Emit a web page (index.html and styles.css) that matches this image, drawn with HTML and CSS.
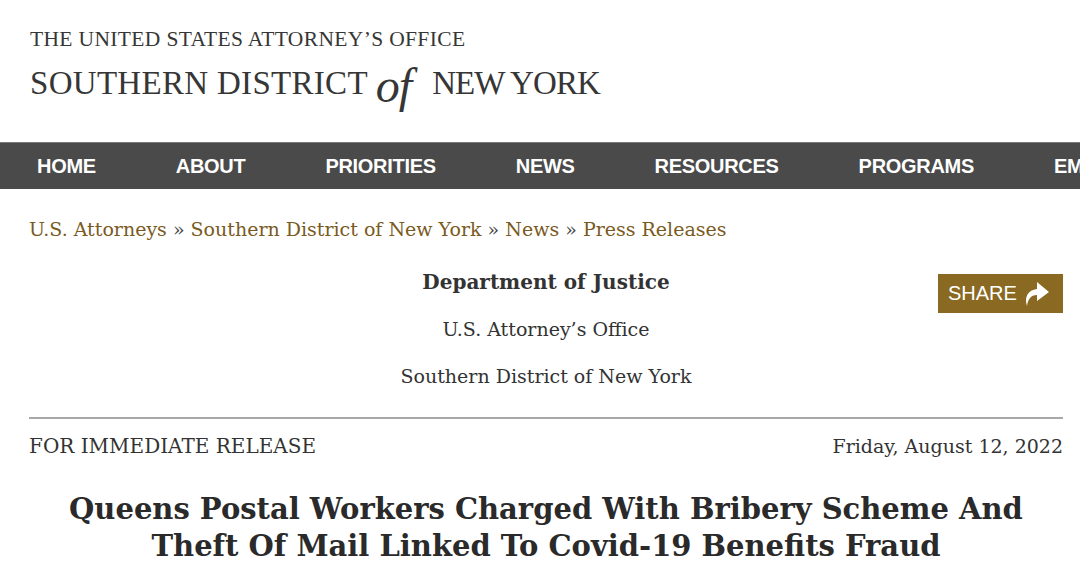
FILE: index.html
```html
<!DOCTYPE html>
<html>
<head>
<meta charset="utf-8">
<link rel="stylesheet" href="styles.css">
</head>
<body>
<header class="site-header">
  <div class="logo">
    <div class="logo-top">THE UNITED STATES ATTORNEY’S OFFICE</div>
    <div class="logo-main">SOUTHERN DISTRICT <span class="logo-of">of</span><span class="logo-ny">NEW YORK</span></div>
  </div>
</header>
<nav class="main-nav">
  <ul class="nav-list">
    <li>HOME</li>
    <li>ABOUT</li>
    <li>PRIORITIES</li>
    <li>NEWS</li>
    <li>RESOURCES</li>
    <li>PROGRAMS</li>
    <li>EMPLOYMENT</li>
  </ul>
</nav>
<main class="content">
  <div class="breadcrumb">
    <a>U.S. Attorneys</a> <span class="sep">»</span> <a>Southern District of New York</a> <span class="sep">»</span> <a>News</a> <span class="sep">»</span> <a>Press Releases</a>
  </div>
  <div class="agency-row">
    <div class="agency">
      <div class="agency-dept">Department of Justice</div>
      <div class="agency-line">U.S. Attorney’s Office</div>
      <div class="agency-line">Southern District of New York</div>
    </div>
    <div class="share">
      <span class="share-label">SHARE</span>
      <svg class="share-icon" width="28" height="28" viewBox="0 0 28 28">
        <path d="M5 27 C2 18 6 11 15 10 L15 3 L27 13 L15 22 L15 16 C10 16 6 19 5 27 Z" fill="#fff"/>
      </svg>
    </div>
  </div>
  <div class="release-row">
    <span class="release-label">FOR IMMEDIATE RELEASE</span>
    <span class="release-date">Friday, August 12, 2022</span>
  </div>
  <h1 class="title">Queens Postal Workers Charged With Bribery Scheme And Theft Of Mail Linked To Covid-19 Benefits Fraud</h1>
</main>
</body>
</html>
```
FILE: styles.css
```css
html, body {
  margin: 0;
  padding: 0;
  background: #fff;
}
body {
  font-family: "DejaVu Serif", "Liberation Serif", serif;
  color: #333;
  overflow: hidden;
  width: 1080px;
}
.site-header {
  height: 142px;
  padding: 27px 0 0 30px;
  box-sizing: border-box;
}
.logo {
  color: #363636;
  font-family: "Liberation Serif", serif;
}
.logo-top {
  font-size: 21.5px;
  line-height: 24px;
  letter-spacing: 0.35px;
}
.logo-main {
  font-size: 33px;
  line-height: 36px;
  margin-top: 9px;
  white-space: nowrap;
  letter-spacing: 0.3px;
}
.logo-of {
  font-style: italic;
  font-size: 48px;
  display: inline-block;
  transform: translateY(8px);
  margin: 0 21px 0 0;
  letter-spacing: -1px;
}
.logo-ny {
  letter-spacing: -0.9px;
}
.main-nav {
  background: #4a4a4a;
  height: 47px;
  overflow: hidden;
  border-top: 1px solid #777;
  box-sizing: border-box;
}
.nav-list {
  list-style: none;
  margin: 0;
  padding: 0 0 0 37px;
  display: flex;
  gap: 80px;
  white-space: nowrap;
  height: 100%;
  align-items: center;
}
.nav-list li {
  font-family: "Liberation Sans", Arial, sans-serif;
  font-weight: bold;
  font-size: 20px;
  color: #fff;
  letter-spacing: -0.3px;
}
.content {
  padding: 0 17px 0 29px;
}
.breadcrumb {
  margin-top: 27px;
  font-size: 19px;
  line-height: 26px;
  color: #555;
}
.breadcrumb a {
  color: #7a5a1e;
}
.breadcrumb .sep {
  color: #444;
}
.agency-row {
  position: relative;
  margin-top: 27px;
  padding-bottom: 28px;
  border-bottom: 2px solid #a8a8a8;
}
.agency {
  text-align: center;
  font-size: 19px;
  color: #333;
}
.agency-dept {
  font-size: 20px;
  font-weight: bold;
  line-height: 26px;
}
.agency-line {
  line-height: 26px;
  margin-top: 21px;
}
.share {
  position: absolute;
  right: 0;
  top: 5px;
  width: 125px;
  height: 39px;
  background: #8a6a22;
  display: flex;
  align-items: center;
  padding-left: 10px;
  box-sizing: border-box;
  gap: 5px;
}
.share-label {
  font-family: "Liberation Sans", Arial, sans-serif;
  color: #fff;
  font-size: 20px;
}
.share-icon {
  margin-top: -2px;
}
.release-row {
  display: flex;
  justify-content: space-between;
  margin-top: 15px;
  font-size: 20px;
  line-height: 24px;
  color: #333;
}
.release-date {
  font-size: 19px;
}
.title {
  margin: 33px auto 0;
  max-width: 1000px;
  text-align: center;
  font-size: 29px;
  line-height: 37px;
  font-weight: bold;
  color: #2a2a2a;
}
```
